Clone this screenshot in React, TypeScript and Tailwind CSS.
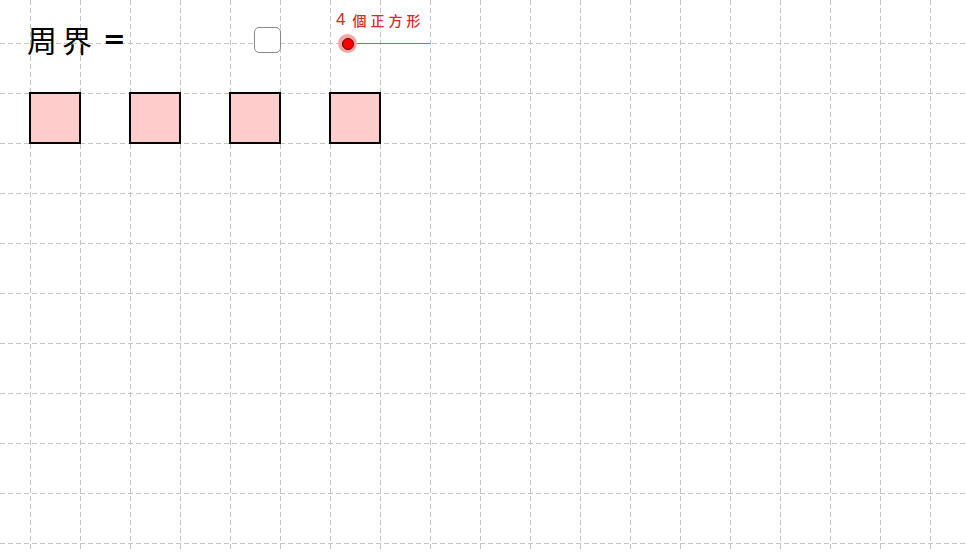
import React from 'react';

const cols = Array.from({ length: 19 }, (_, i) => 30.5 + i * 50);
const rows = Array.from({ length: 11 }, (_, i) => 43.5 + i * 50);

// dashed background grid, 50px spacing
function Grid() {
  return (
    <svg className="absolute inset-0" width="966" height="552">
      {cols.map((x) => (
        <line key={'c' + x} x1={x} y1={0} x2={x} y2={552} stroke="#c4c4c4" strokeWidth={1} strokeDasharray="5 3" />
      ))}
      {rows.map((y) => (
        <line key={'r' + y} x1={0} y1={y} x2={966} y2={y} stroke="#c4c4c4" strokeWidth={1} strokeDasharray="5 3" />
      ))}
    </svg>
  );
}

function Slider() {
  return (
    <div className="flex flex-col ml-[55px]">
      <div className="flex items-center gap-[7px] text-[#d42a2a]">
        <span className="text-[17px] leading-[22px]" style={{ fontFamily: '"Liberation Sans", sans-serif' }}>4</span>
        <span className="text-[14px] leading-[22px] tracking-[4px] font-medium">個正方形</span>
      </div>
      <div className="relative mt-[3px] w-[94px] h-[19px]">
        <div className="absolute left-[11px] top-[9px] w-[83px] h-[1px] bg-[#cf5a52]" />
        <div className="absolute left-[2px] top-0 w-[19px] h-[19px] rounded-full bg-[#f6a5a5] flex items-center justify-center">
          <div className="w-[12px] h-[12px] rounded-full bg-[#f00] border border-[#500]" />
        </div>
      </div>
    </div>
  );
}

export default function App() {
  return (
    <div className="relative w-[966px] h-[552px] bg-white overflow-hidden" style={{ fontFamily: '"Noto Sans CJK TC", "Liberation Sans", sans-serif' }}>
      <Grid />

      <div className="relative flex flex-col pt-[9px] pl-[27px]">
        {/* top row: title, checkbox, slider */}
        <div className="flex items-start h-[83px]">
          <div className="w-[227px] mt-[10px] flex items-center gap-[6px] text-black">
            <span className="text-[30px] leading-[40px] tracking-[5px]">周界</span>
            <span className="text-[27px] leading-[40px] font-bold" style={{ fontFamily: '"DejaVu Sans", sans-serif' }}>=</span>
          </div>
          <div className="mt-[18px] w-[27px] h-[26px] rounded-[5px] border border-[#8a8a8a] bg-white" />
          <Slider />
        </div>

        {/* squares */}
        <div className="flex gap-[48px] ml-[2px]">
          {[0, 1, 2, 3].map((i) => (
            <div key={i} className="w-[52px] h-[52px] bg-[#ffcccc] border-2 border-black" />
          ))}
        </div>
      </div>
    </div>
  );
}
